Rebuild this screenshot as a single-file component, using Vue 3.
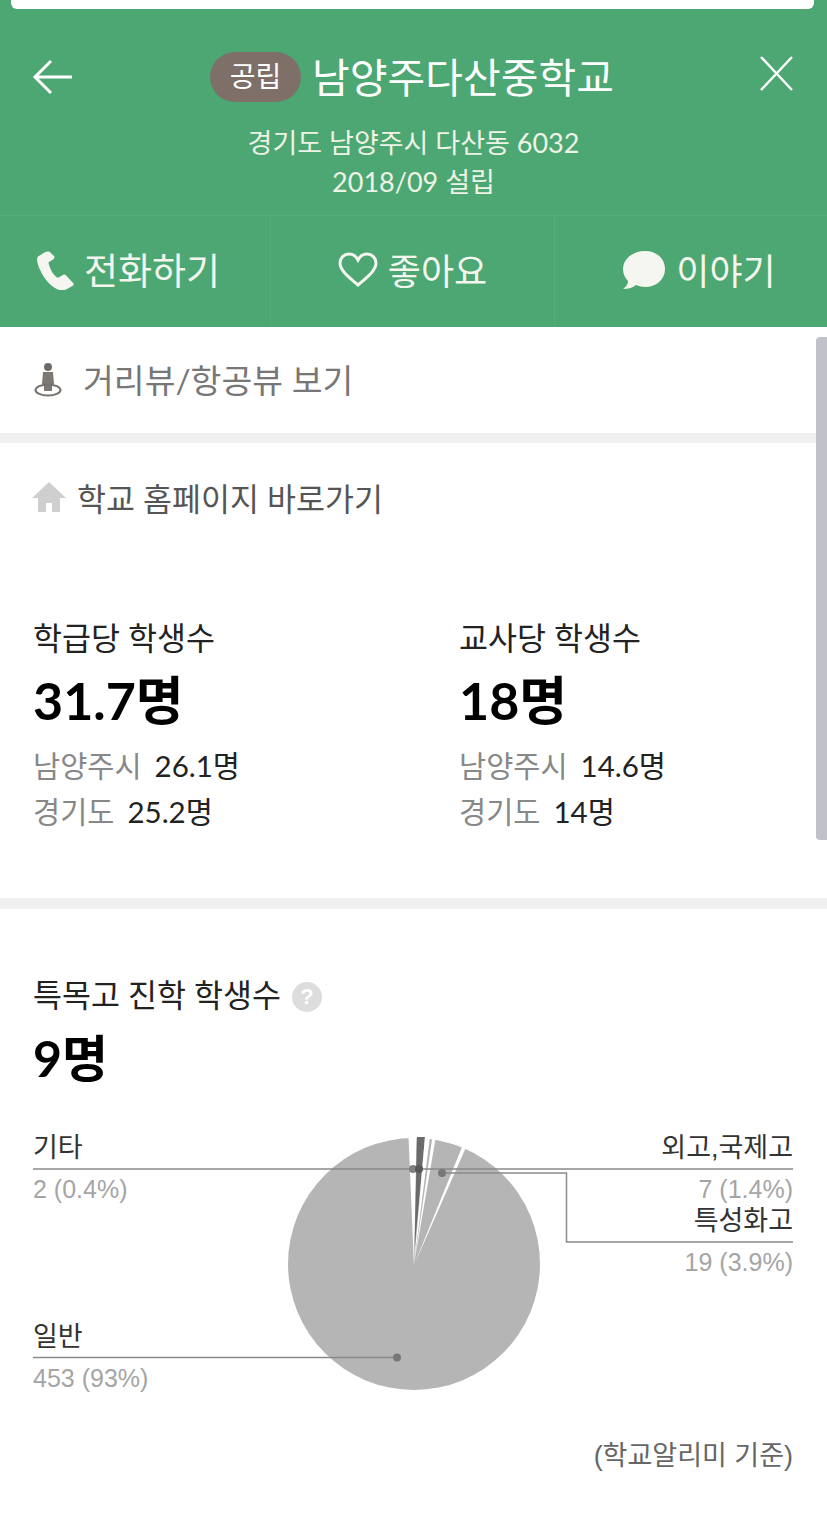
<template>
    <div class="page">
        <header class="head">
            <div class="search-edge"></div>
            <div class="title-row">
                <svg class="back" width="42" height="36" viewBox="0 0 42 36" fill="none" stroke="#fff" stroke-width="3">
                    <path d="M40 18H3M19 2 3 18l16 16" />
                </svg>
                <div class="title">
                    <span class="badge">공립</span>
                    <h1>남양주다산중학교</h1>
                </div>
                <svg class="close" width="36" height="36" viewBox="0 0 36 36" fill="none" stroke="#fff" stroke-width="2.4">
                    <path d="M2 1l31 33M33 1 2 34" />
                </svg>
            </div>
            <p class="addr">경기도 남양주시 다산동 6032</p>
            <p class="addr">2018/09 설립</p>
            <nav class="actions">
                <a class="act">
                    <svg width="38" height="40" viewBox="0 0 33 38" preserveAspectRatio="none" fill="#f6f6f0">
                        <path d="M8 2 2 6C0 8 1 13 4 20c3 7 8 14 14 17 3 2 6 2 9 0l5-3c1-1 1-2 0-3l-6-7c-1-1-2-1-3 0l-3 2c-1 1-2 0-3-1-3-3-5-8-6-12 0-1 0-2 1-2l3-2c1-1 1-2 1-3L13 3c-1-2-3-2-5-1Z" />
                    </svg>
                    전화하기
                </a>
                <a class="act">
                    <svg width="40" height="36" viewBox="0 0 40 36" fill="none" stroke="#f6f6f0" stroke-width="3">
                        <path d="M20 33C12 26 2 19 2 11 2 6 6 2 11 2c4 0 7 2 9 6 2-4 5-6 9-6 5 0 9 4 9 9 0 8-10 15-18 22Z" />
                    </svg>
                    좋아요
                </a>
                <a class="act">
                    <svg width="46" height="40" viewBox="0 0 46 40" fill="#f6f6f0">
                        <path d="M25 1C13 1 3 9 3 19c0 5 2 9 5 12 0 3-2 6-5 8 5 0 9-1 13-4 3 1 6 2 9 2 12 0 20-8 20-18S37 1 25 1Z" />
                    </svg>
                    이야기
                </a>
            </nav>
        </header>

        <div class="street">
            <svg width="30" height="36" viewBox="0 0 30 36">
                <circle cx="15" cy="5" r="4" fill="#6f6a66" />
                <path d="M10 10h10l1 12h-2v7h-8v-7H9Z" fill="#7d7873" />
                <ellipse cx="15" cy="28" rx="12.5" ry="5.5" fill="none" stroke="#77716c" stroke-width="2" />
            </svg>
            <span>거리뷰/항공뷰 보기</span>
        </div>

        <section class="info">
            <div class="home">
                <svg width="36" height="32" viewBox="0 0 36 32" fill="#cfcfcf">
                    <path d="M18 1 1 17h6v14h8v-9h6v9h8V17h6Z" />
                </svg>
                <span>학교 홈페이지 바로가기</span>
            </div>
            <div class="stats">
                <div v-for="stat in stats" :key="stat.label" class="stat">
                    <div class="stat-label">{{ stat.label }}</div>
                    <div class="stat-value">{{ stat.value }}</div>
                    <div v-for="row in stat.rows" :key="row[0]" class="stat-row">
                        <span>{{ row[0] }}</span><b>{{ row[1] }}</b>
                    </div>
                </div>
            </div>
        </section>

        <section class="special">
            <div class="special-title">
                특목고 진학 학생수
                <span class="help">?</span>
            </div>
            <div class="special-value">9명</div>
            <div class="chart">
                <svg class="pie" width="827" height="300" viewBox="0 1110 827 300">
                    <circle cx="414" cy="1264" r="126" fill="#b5b5b5" />
                    <polygon points="414,1266 408.5,1136 416.5,1136" fill="#fff" />
                    <polygon points="414.5,1250 417,1137 425,1137" fill="#6b6b6b" />
                    <polygon points="414,1264 425,1136 430,1136" fill="#fff" />
                    <polygon points="414,1264 432.5,1136 436,1136" fill="#fff" />
                    <polygon points="414.5,1264 462,1147 465.5,1148.5" fill="#fff" />
                    <g fill="none" stroke="#8a8a8a" stroke-width="1.5">
                        <path d="M33 1169H793" />
                        <path d="M442 1173H566.5V1242H793" />
                        <path d="M33 1357.5H397" />
                    </g>
                    <circle cx="413" cy="1169" r="4" fill="#808080" />
                    <circle cx="419" cy="1169" r="4" fill="#585858" />
                    <circle cx="442" cy="1173" r="4" fill="#777" />
                    <circle cx="397" cy="1357.5" r="4" fill="#777" />
                </svg>
                <div v-for="item in slices" :key="item.name" class="slice" :class="item.side" :style="{ top: item.top + 'px' }">
                    <div class="slice-name">{{ item.name }}</div>
                    <div class="slice-count">{{ item.count }}</div>
                </div>
            </div>
            <p class="source">(학교알리미 기준)</p>
        </section>

        <div class="scrollbar"></div>
    </div>
</template>

<script setup>
const stats = [
    { label: "학급당 학생수", value: "31.7명", rows: [["남양주시", "26.1명"], ["경기도", "25.2명"]] },
    { label: "교사당 학생수", value: "18명", rows: [["남양주시", "14.6명"], ["경기도", "14명"]] },
];

const slices = [
    { name: "기타", count: "2 (0.4%)", side: "left", top: 20 },
    { name: "외고,국제고", count: "7 (1.4%)", side: "right", top: 20 },
    { name: "특성화고", count: "19 (3.9%)", side: "right", top: 93 },
    { name: "일반", count: "453 (93%)", side: "left", top: 209 },
];
</script>

<style>
html,
body {
    margin: 0;
    background: #fff;
}
</style>

<style scoped>
.page {
    position: relative;
    width: 827px;
    height: 1527px;
    overflow: hidden;
    background: #fff;
    font-family: Lato, "Noto Sans CJK KR", sans-serif;
    color: #111;
}

.head {
    height: 327px;
    background: #4ca773;
    color: #fff;
    text-align: center;
}

.search-edge {
    height: 9px;
    margin: 0 13px 0 11px;
    background: #fff;
    border-radius: 0 0 6px 6px;
}

.title-row {
    display: flex;
    align-items: center;
    justify-content: space-between;
    height: 52px;
    margin-top: 43px;
    padding: 0 32px;
}

.back {
    margin-top: -3px;
}

.close {
    margin-top: -8px;
}

.title {
    display: flex;
    align-items: center;
    gap: 11px;
    margin-right: 9px;
}

.badge {
    width: 91px;
    height: 50px;
    margin-top: -3px;
    line-height: 48px;
    border-radius: 25px;
    background: #7e6f69;
    font-size: 28px;
}

h1 {
    margin: 0;
    font-size: 41px;
    font-weight: 400;
    line-height: 52px;
}

.addr {
    margin: 0;
    font-size: 27px;
    line-height: 39px;
    color: #eef3e6;
}

.addr:first-of-type {
    margin-top: 19px;
}

.actions {
    display: grid;
    grid-template-columns: 270px 284px 273px;
    height: 112px;
    margin-top: 14px;
    border-top: 1px solid #55ad7b;
    box-sizing: border-box;
}

.act {
    display: flex;
    align-items: center;
    justify-content: center;
    gap: 10px;
    padding-bottom: 6px;
    box-sizing: border-box;
    font-size: 36px;
    color: #f4f6ee;
}

.act svg {
    margin-top: 3px;
}

.act:first-child {
    font-size: 37px;
    padding-right: 14px;
}

.act + .act {
    border-left: 1px solid #55ad7b;
}

.act:last-child {
    padding-left: 14px;
}

.street {
    display: flex;
    align-items: center;
    gap: 20px;
    height: 106px;
    padding-left: 33px;
    border-bottom: 10px solid #f0f0f0;
    font-size: 33.5px;
    color: #777;
}

.street span {
    margin-top: -4px;
}

.home {
    display: flex;
    align-items: center;
    gap: 10px;
    padding: 31px 0 0 31px;
    height: 46px;
    font-size: 31.5px;
    color: #555;
}

.stats {
    display: grid;
    grid-template-columns: 426px 1fr;
    padding: 96px 0 0 33px;
}

.stat-label {
    font-size: 31.5px;
    line-height: 44px;
    color: #222;
}

.stat-value {
    margin: 9px 0 12px;
    font-size: 52px;
    font-weight: 700;
    line-height: 62px;
    color: #000;
}

.stat-row {
    font-size: 29.5px;
    line-height: 46px;
    color: #888;
}

.stat-row b {
    margin-left: 13px;
    font-weight: 400;
    color: #222;
}

.info {
    height: 455px;
    border-bottom: 11px solid #f0f0f0;
}

.special {
    padding: 61px 34px 0 33px;
}

.special-title {
    display: flex;
    align-items: center;
    gap: 11px;
    font-size: 31.5px;
    line-height: 50px;
    color: #222;
}

.help {
    width: 30px;
    height: 30px;
    margin-top: 3px;
    border-radius: 50%;
    background: #ddd;
    color: #fff;
    font: 700 22px/30px "Liberation Sans", sans-serif;
    text-align: center;
}

.special-value {
    margin-top: 7px;
    font-size: 50px;
    font-weight: 700;
    line-height: 62px;
    color: #000;
}

.chart {
    position: relative;
    height: 328px;
    margin-top: 21px;
}

.pie {
    position: absolute;
    left: -33px;
    top: 0;
}

.slice {
    position: absolute;
    font-family: "Liberation Sans", "Noto Sans CJK KR", sans-serif;
}

.slice.left {
    left: 0;
}

.slice.right {
    right: 0;
    text-align: right;
}

.slice-name {
    font-size: 27px;
    line-height: 36px;
    color: #333;
}

.slice-count {
    margin-top: 5px;
    font-size: 25px;
    line-height: 36px;
    color: #a5a5a5;
}

.source {
    margin: 0;
    text-align: right;
    font-family: "Liberation Sans", "Noto Sans CJK KR", sans-serif;
    font-size: 27px;
    line-height: 36px;
    color: #666;
}

.scrollbar {
    position: absolute;
    top: 337px;
    right: 0;
    width: 11px;
    height: 503px;
    background: #c1c1c9;
    border-radius: 4px 0 0 4px;
}
</style>
